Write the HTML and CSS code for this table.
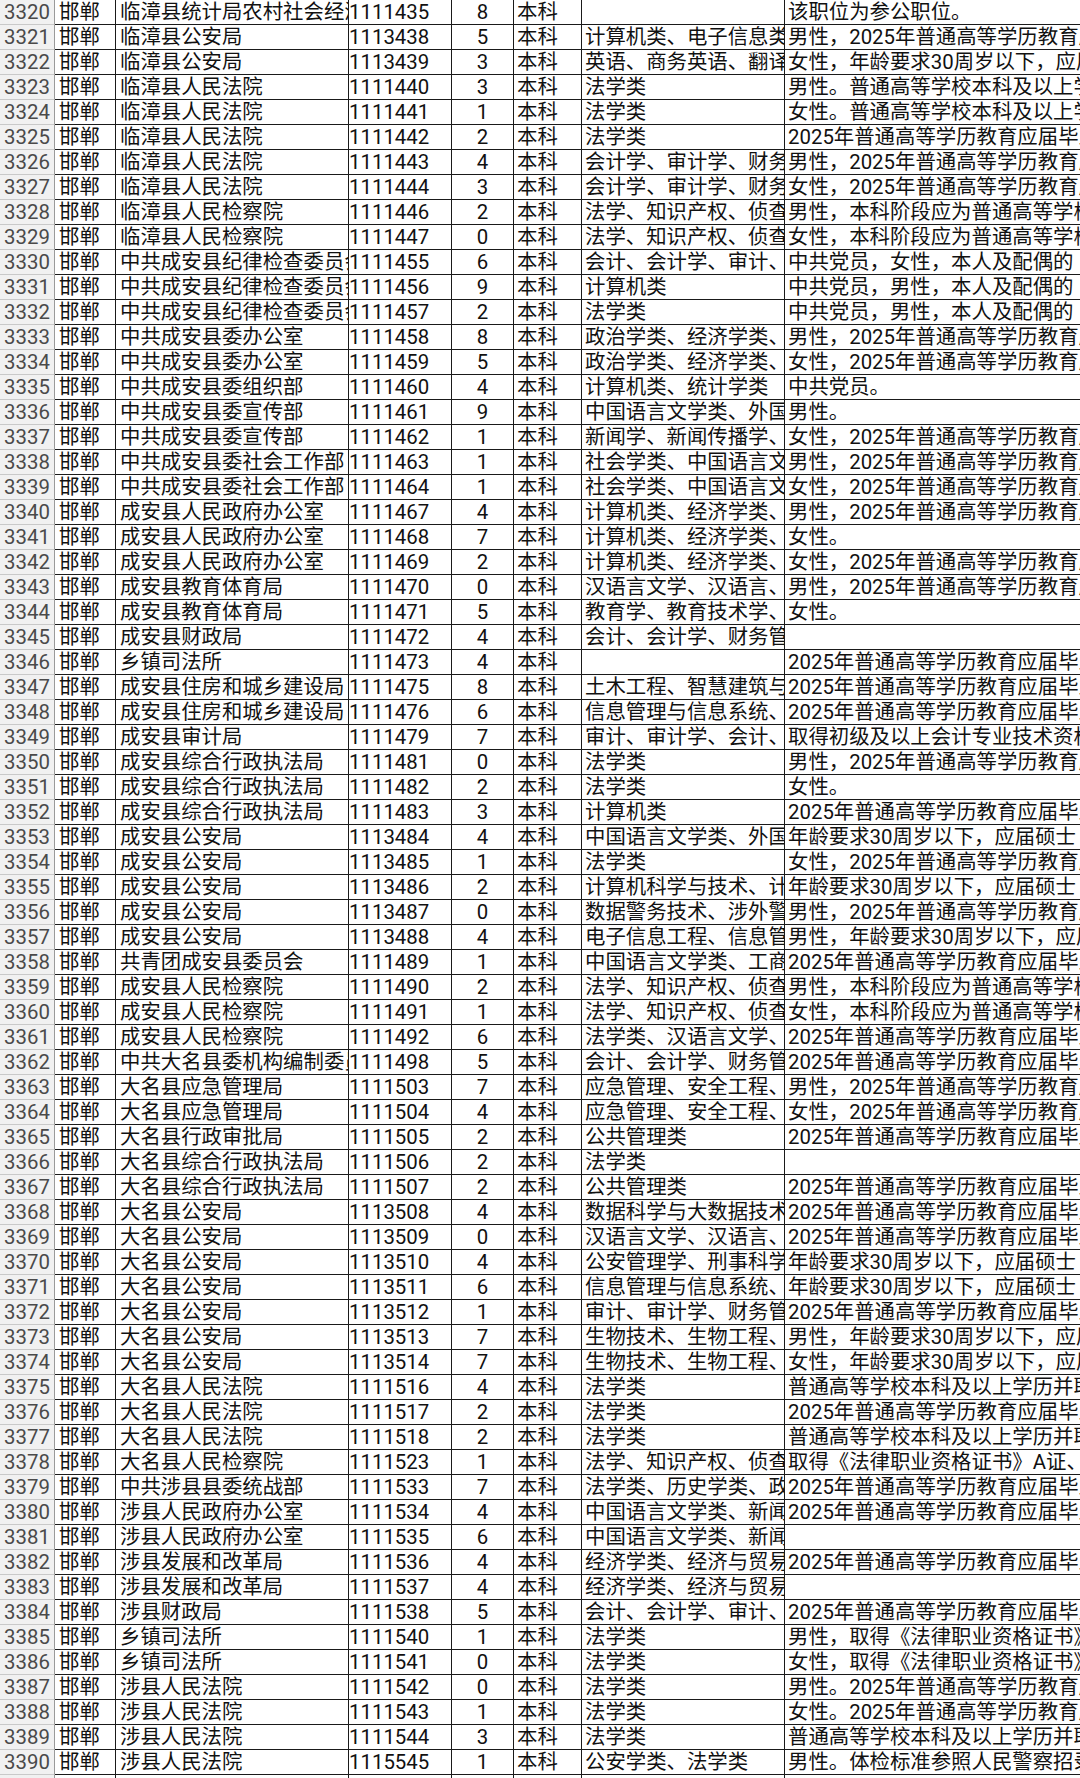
FILE: index.html
```html
<!DOCTYPE html>
<html lang="zh-CN">
<head>
<meta charset="utf-8">
<title>职位表</title>
<link rel="stylesheet" href="styles.css">
</head>
<body>
<div class="sheet">
<div class="row"><div>3320</div><div>邯郸</div><div>临漳县统计局农村社会经济调查队</div><div>1111435</div><div>8</div><div>本科</div><div></div><div>该职位为参公职位。</div></div>
<div class="row"><div>3321</div><div>邯郸</div><div>临漳县公安局</div><div>1113438</div><div>5</div><div>本科</div><div>计算机类、电子信息类</div><div>男性，2025年普通高等学历教育应届毕业生</div></div>
<div class="row"><div>3322</div><div>邯郸</div><div>临漳县公安局</div><div>1113439</div><div>3</div><div>本科</div><div>英语、商务英语、翻译</div><div>女性，年龄要求30周岁以下，应届硕士</div></div>
<div class="row"><div>3323</div><div>邯郸</div><div>临漳县人民法院</div><div>1111440</div><div>3</div><div>本科</div><div>法学类</div><div>男性。普通高等学校本科及以上学历</div></div>
<div class="row"><div>3324</div><div>邯郸</div><div>临漳县人民法院</div><div>1111441</div><div>1</div><div>本科</div><div>法学类</div><div>女性。普通高等学校本科及以上学历</div></div>
<div class="row"><div>3325</div><div>邯郸</div><div>临漳县人民法院</div><div>1111442</div><div>2</div><div>本科</div><div>法学类</div><div>2025年普通高等学历教育应届毕业生</div></div>
<div class="row"><div>3326</div><div>邯郸</div><div>临漳县人民法院</div><div>1111443</div><div>4</div><div>本科</div><div>会计学、审计学、财务管理</div><div>男性，2025年普通高等学历教育应届</div></div>
<div class="row"><div>3327</div><div>邯郸</div><div>临漳县人民法院</div><div>1111444</div><div>3</div><div>本科</div><div>会计学、审计学、财务管理</div><div>女性，2025年普通高等学历教育应届</div></div>
<div class="row"><div>3328</div><div>邯郸</div><div>临漳县人民检察院</div><div>1111446</div><div>2</div><div>本科</div><div>法学、知识产权、侦查学</div><div>男性，本科阶段应为普通高等学校</div></div>
<div class="row"><div>3329</div><div>邯郸</div><div>临漳县人民检察院</div><div>1111447</div><div>0</div><div>本科</div><div>法学、知识产权、侦查学</div><div>女性，本科阶段应为普通高等学校</div></div>
<div class="row"><div>3330</div><div>邯郸</div><div>中共成安县纪律检查委员会</div><div>1111455</div><div>6</div><div>本科</div><div>会计、会计学、审计、审计学</div><div>中共党员，女性，本人及配偶的</div></div>
<div class="row"><div>3331</div><div>邯郸</div><div>中共成安县纪律检查委员会</div><div>1111456</div><div>9</div><div>本科</div><div>计算机类</div><div>中共党员，男性，本人及配偶的</div></div>
<div class="row"><div>3332</div><div>邯郸</div><div>中共成安县纪律检查委员会</div><div>1111457</div><div>2</div><div>本科</div><div>法学类</div><div>中共党员，男性，本人及配偶的</div></div>
<div class="row"><div>3333</div><div>邯郸</div><div>中共成安县委办公室</div><div>1111458</div><div>8</div><div>本科</div><div>政治学类、经济学类、法学类</div><div>男性，2025年普通高等学历教育应届</div></div>
<div class="row"><div>3334</div><div>邯郸</div><div>中共成安县委办公室</div><div>1111459</div><div>5</div><div>本科</div><div>政治学类、经济学类、法学类</div><div>女性，2025年普通高等学历教育应届</div></div>
<div class="row"><div>3335</div><div>邯郸</div><div>中共成安县委组织部</div><div>1111460</div><div>4</div><div>本科</div><div>计算机类、统计学类</div><div>中共党员。</div></div>
<div class="row"><div>3336</div><div>邯郸</div><div>中共成安县委宣传部</div><div>1111461</div><div>9</div><div>本科</div><div>中国语言文学类、外国语言文学类</div><div>男性。</div></div>
<div class="row"><div>3337</div><div>邯郸</div><div>中共成安县委宣传部</div><div>1111462</div><div>1</div><div>本科</div><div>新闻学、新闻传播学、广告学</div><div>女性，2025年普通高等学历教育应届</div></div>
<div class="row"><div>3338</div><div>邯郸</div><div>中共成安县委社会工作部</div><div>1111463</div><div>1</div><div>本科</div><div>社会学类、中国语言文学类</div><div>男性，2025年普通高等学历教育应届</div></div>
<div class="row"><div>3339</div><div>邯郸</div><div>中共成安县委社会工作部</div><div>1111464</div><div>1</div><div>本科</div><div>社会学类、中国语言文学类</div><div>女性，2025年普通高等学历教育应届</div></div>
<div class="row"><div>3340</div><div>邯郸</div><div>成安县人民政府办公室</div><div>1111467</div><div>4</div><div>本科</div><div>计算机类、经济学类、法学类</div><div>男性，2025年普通高等学历教育应届</div></div>
<div class="row"><div>3341</div><div>邯郸</div><div>成安县人民政府办公室</div><div>1111468</div><div>7</div><div>本科</div><div>计算机类、经济学类、法学类</div><div>女性。</div></div>
<div class="row"><div>3342</div><div>邯郸</div><div>成安县人民政府办公室</div><div>1111469</div><div>2</div><div>本科</div><div>计算机类、经济学类、法学类</div><div>女性，2025年普通高等学历教育应届</div></div>
<div class="row"><div>3343</div><div>邯郸</div><div>成安县教育体育局</div><div>1111470</div><div>0</div><div>本科</div><div>汉语言文学、汉语言、应用语言学</div><div>男性，2025年普通高等学历教育应届</div></div>
<div class="row"><div>3344</div><div>邯郸</div><div>成安县教育体育局</div><div>1111471</div><div>5</div><div>本科</div><div>教育学、教育技术学、科学教育</div><div>女性。</div></div>
<div class="row"><div>3345</div><div>邯郸</div><div>成安县财政局</div><div>1111472</div><div>4</div><div>本科</div><div>会计、会计学、财务管理</div><div></div></div>
<div class="row"><div>3346</div><div>邯郸</div><div>乡镇司法所</div><div>1111473</div><div>4</div><div>本科</div><div></div><div>2025年普通高等学历教育应届毕业生</div></div>
<div class="row"><div>3347</div><div>邯郸</div><div>成安县住房和城乡建设局</div><div>1111475</div><div>8</div><div>本科</div><div>土木工程、智慧建筑与建造</div><div>2025年普通高等学历教育应届毕业生</div></div>
<div class="row"><div>3348</div><div>邯郸</div><div>成安县住房和城乡建设局</div><div>1111476</div><div>6</div><div>本科</div><div>信息管理与信息系统、计算机类</div><div>2025年普通高等学历教育应届毕业生</div></div>
<div class="row"><div>3349</div><div>邯郸</div><div>成安县审计局</div><div>1111479</div><div>7</div><div>本科</div><div>审计、审计学、会计、会计学</div><div>取得初级及以上会计专业技术资格</div></div>
<div class="row"><div>3350</div><div>邯郸</div><div>成安县综合行政执法局</div><div>1111481</div><div>0</div><div>本科</div><div>法学类</div><div>男性，2025年普通高等学历教育应届</div></div>
<div class="row"><div>3351</div><div>邯郸</div><div>成安县综合行政执法局</div><div>1111482</div><div>2</div><div>本科</div><div>法学类</div><div>女性。</div></div>
<div class="row"><div>3352</div><div>邯郸</div><div>成安县综合行政执法局</div><div>1111483</div><div>3</div><div>本科</div><div>计算机类</div><div>2025年普通高等学历教育应届毕业生</div></div>
<div class="row"><div>3353</div><div>邯郸</div><div>成安县公安局</div><div>1113484</div><div>4</div><div>本科</div><div>中国语言文学类、外国语言文学类</div><div>年龄要求30周岁以下，应届硕士</div></div>
<div class="row"><div>3354</div><div>邯郸</div><div>成安县公安局</div><div>1113485</div><div>1</div><div>本科</div><div>法学类</div><div>女性，2025年普通高等学历教育应届</div></div>
<div class="row"><div>3355</div><div>邯郸</div><div>成安县公安局</div><div>1113486</div><div>2</div><div>本科</div><div>计算机科学与技术、计算机类</div><div>年龄要求30周岁以下，应届硕士</div></div>
<div class="row"><div>3356</div><div>邯郸</div><div>成安县公安局</div><div>1113487</div><div>0</div><div>本科</div><div>数据警务技术、涉外警务</div><div>男性，2025年普通高等学历教育应届</div></div>
<div class="row"><div>3357</div><div>邯郸</div><div>成安县公安局</div><div>1113488</div><div>4</div><div>本科</div><div>电子信息工程、信息管理与信息系统</div><div>男性，年龄要求30周岁以下，应届</div></div>
<div class="row"><div>3358</div><div>邯郸</div><div>共青团成安县委员会</div><div>1111489</div><div>1</div><div>本科</div><div>中国语言文学类、工商管理类</div><div>2025年普通高等学历教育应届毕业生</div></div>
<div class="row"><div>3359</div><div>邯郸</div><div>成安县人民检察院</div><div>1111490</div><div>2</div><div>本科</div><div>法学、知识产权、侦查学</div><div>男性，本科阶段应为普通高等学校</div></div>
<div class="row"><div>3360</div><div>邯郸</div><div>成安县人民检察院</div><div>1111491</div><div>1</div><div>本科</div><div>法学、知识产权、侦查学</div><div>女性，本科阶段应为普通高等学校</div></div>
<div class="row"><div>3361</div><div>邯郸</div><div>成安县人民检察院</div><div>1111492</div><div>6</div><div>本科</div><div>法学类、汉语言文学、新闻学</div><div>2025年普通高等学历教育应届毕业生</div></div>
<div class="row"><div>3362</div><div>邯郸</div><div>中共大名县委机构编制委员会办公室</div><div>1111498</div><div>5</div><div>本科</div><div>会计、会计学、财务管理</div><div>2025年普通高等学历教育应届毕业生</div></div>
<div class="row"><div>3363</div><div>邯郸</div><div>大名县应急管理局</div><div>1111503</div><div>7</div><div>本科</div><div>应急管理、安全工程、消防工程</div><div>男性，2025年普通高等学历教育应届</div></div>
<div class="row"><div>3364</div><div>邯郸</div><div>大名县应急管理局</div><div>1111504</div><div>4</div><div>本科</div><div>应急管理、安全工程、消防工程</div><div>女性，2025年普通高等学历教育应届</div></div>
<div class="row"><div>3365</div><div>邯郸</div><div>大名县行政审批局</div><div>1111505</div><div>2</div><div>本科</div><div>公共管理类</div><div>2025年普通高等学历教育应届毕业生</div></div>
<div class="row"><div>3366</div><div>邯郸</div><div>大名县综合行政执法局</div><div>1111506</div><div>2</div><div>本科</div><div>法学类</div><div></div></div>
<div class="row"><div>3367</div><div>邯郸</div><div>大名县综合行政执法局</div><div>1111507</div><div>2</div><div>本科</div><div>公共管理类</div><div>2025年普通高等学历教育应届毕业生</div></div>
<div class="row"><div>3368</div><div>邯郸</div><div>大名县公安局</div><div>1113508</div><div>4</div><div>本科</div><div>数据科学与大数据技术</div><div>2025年普通高等学历教育应届毕业生</div></div>
<div class="row"><div>3369</div><div>邯郸</div><div>大名县公安局</div><div>1113509</div><div>0</div><div>本科</div><div>汉语言文学、汉语言、秘书学</div><div>2025年普通高等学历教育应届毕业生</div></div>
<div class="row"><div>3370</div><div>邯郸</div><div>大名县公安局</div><div>1113510</div><div>4</div><div>本科</div><div>公安管理学、刑事科学技术</div><div>年龄要求30周岁以下，应届硕士</div></div>
<div class="row"><div>3371</div><div>邯郸</div><div>大名县公安局</div><div>1113511</div><div>6</div><div>本科</div><div>信息管理与信息系统、计算机类</div><div>年龄要求30周岁以下，应届硕士</div></div>
<div class="row"><div>3372</div><div>邯郸</div><div>大名县公安局</div><div>1113512</div><div>1</div><div>本科</div><div>审计、审计学、财务管理</div><div>2025年普通高等学历教育应届毕业生</div></div>
<div class="row"><div>3373</div><div>邯郸</div><div>大名县公安局</div><div>1113513</div><div>7</div><div>本科</div><div>生物技术、生物工程、生物科学</div><div>男性，年龄要求30周岁以下，应届</div></div>
<div class="row"><div>3374</div><div>邯郸</div><div>大名县公安局</div><div>1113514</div><div>7</div><div>本科</div><div>生物技术、生物工程、生物科学</div><div>女性，年龄要求30周岁以下，应届</div></div>
<div class="row"><div>3375</div><div>邯郸</div><div>大名县人民法院</div><div>1111516</div><div>4</div><div>本科</div><div>法学类</div><div>普通高等学校本科及以上学历并取得</div></div>
<div class="row"><div>3376</div><div>邯郸</div><div>大名县人民法院</div><div>1111517</div><div>2</div><div>本科</div><div>法学类</div><div>2025年普通高等学历教育应届毕业生</div></div>
<div class="row"><div>3377</div><div>邯郸</div><div>大名县人民法院</div><div>1111518</div><div>2</div><div>本科</div><div>法学类</div><div>普通高等学校本科及以上学历并取得</div></div>
<div class="row"><div>3378</div><div>邯郸</div><div>大名县人民检察院</div><div>1111523</div><div>1</div><div>本科</div><div>法学、知识产权、侦查学</div><div>取得《法律职业资格证书》A证、B证</div></div>
<div class="row"><div>3379</div><div>邯郸</div><div>中共涉县县委统战部</div><div>1111533</div><div>7</div><div>本科</div><div>法学类、历史学类、政治学类</div><div>2025年普通高等学历教育应届毕业生</div></div>
<div class="row"><div>3380</div><div>邯郸</div><div>涉县人民政府办公室</div><div>1111534</div><div>4</div><div>本科</div><div>中国语言文学类、新闻传播学类</div><div>2025年普通高等学历教育应届毕业生</div></div>
<div class="row"><div>3381</div><div>邯郸</div><div>涉县人民政府办公室</div><div>1111535</div><div>6</div><div>本科</div><div>中国语言文学类、新闻传播学类</div><div></div></div>
<div class="row"><div>3382</div><div>邯郸</div><div>涉县发展和改革局</div><div>1111536</div><div>4</div><div>本科</div><div>经济学类、经济与贸易类</div><div>2025年普通高等学历教育应届毕业生</div></div>
<div class="row"><div>3383</div><div>邯郸</div><div>涉县发展和改革局</div><div>1111537</div><div>4</div><div>本科</div><div>经济学类、经济与贸易类</div><div></div></div>
<div class="row"><div>3384</div><div>邯郸</div><div>涉县财政局</div><div>1111538</div><div>5</div><div>本科</div><div>会计、会计学、审计、审计学</div><div>2025年普通高等学历教育应届毕业生</div></div>
<div class="row"><div>3385</div><div>邯郸</div><div>乡镇司法所</div><div>1111540</div><div>1</div><div>本科</div><div>法学类</div><div>男性，取得《法律职业资格证书》</div></div>
<div class="row"><div>3386</div><div>邯郸</div><div>乡镇司法所</div><div>1111541</div><div>0</div><div>本科</div><div>法学类</div><div>女性，取得《法律职业资格证书》</div></div>
<div class="row"><div>3387</div><div>邯郸</div><div>涉县人民法院</div><div>1111542</div><div>0</div><div>本科</div><div>法学类</div><div>男性。2025年普通高等学历教育应届</div></div>
<div class="row"><div>3388</div><div>邯郸</div><div>涉县人民法院</div><div>1111543</div><div>1</div><div>本科</div><div>法学类</div><div>女性。2025年普通高等学历教育应届</div></div>
<div class="row"><div>3389</div><div>邯郸</div><div>涉县人民法院</div><div>1111544</div><div>3</div><div>本科</div><div>法学类</div><div>普通高等学校本科及以上学历并取得</div></div>
<div class="row"><div>3390</div><div>邯郸</div><div>涉县人民法院</div><div>1115545</div><div>1</div><div>本科</div><div>公安学类、法学类</div><div>男性。体检标准参照人民警察招录</div></div>
<div class="row"><div></div><div></div><div></div><div></div><div></div><div></div><div></div><div></div></div>
</div>
</body>
</html>
```

FILE: styles.css
```css
html, body {
  margin: 0;
  padding: 0;
  background: #ffffff;
  overflow: hidden;
}

.sheet {
  width: 1080px;
  font-family: Roboto, "Noto Sans CJK SC", sans-serif;
  font-size: 20.4px;
  color: #111111;
}

.row {
  display: grid;
  grid-template-columns: 55px 61px 233px 103px 62px 68px 203px 295px;
  height: 25px;
}

.row > div {
  box-sizing: border-box;
  height: 25px;
  line-height: 24px;
  border-right: 1px solid #1a1a1a;
  border-bottom: 1px solid #1a1a1a;
  white-space: nowrap;
  overflow: hidden;
  padding: 0 0 0 3px;
}

.row > div:nth-child(1) {
  background: #f1f1f1;
  color: #4a4a4a;
  text-align: center;
  padding: 0;
  border-bottom-color: #c9c9c9;
  border-right-color: #9a9a9a;
}

.row > div:nth-child(2),
.row > div:nth-child(3) {
  padding-left: 4px;
}

.row > div:nth-child(4) {
  padding-left: 0;
}

.row > div:nth-child(5) {
  text-align: center;
  padding: 0;
}

.row > div:nth-child(8) {
  border-right: none;
}
```
